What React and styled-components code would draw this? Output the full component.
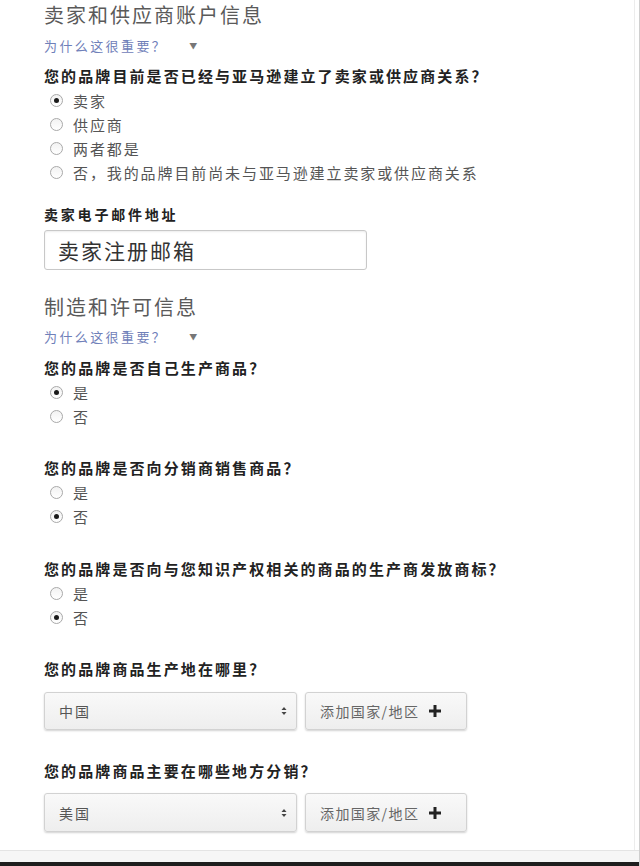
import React from 'react';
import styled, { createGlobalStyle } from 'styled-components';

const GlobalStyle = createGlobalStyle`
  html, body { margin: 0; padding: 0; background: #fff; }
  body { font-family: "Noto Sans CJK SC", "Noto Sans", sans-serif; }
`;

const Page = styled.div`
  width: 640px;
  height: 866px;
  box-sizing: border-box;
  display: flex;
  flex-direction: column;
  border-right: 1px solid #cfcfcf;
`;

const Content = styled.div`
  flex: 1;
  padding-left: 44px;
  border-right: 1px solid #ececec;
  margin-right: 4px;
`;

const Footer = styled.div`
  height: 11px;
  background: #f6f6f6;
  border-top: 1px solid #e4e4e4;
  border-bottom: 4px solid #1e1e1e;
`;

const Heading = styled.h2`
  margin: ${p => p.$gap || 0}px 0 0;
  font-size: 20px;
  font-weight: 400;
  line-height: 30px;
  letter-spacing: 2px;
  color: #5a5a5a;
`;

const WhyLink = styled.div`
  margin-top: ${p => p.$gap || 0}px;
  font-size: 13px;
  line-height: 20px;
  letter-spacing: 2.4px;
  color: #6f80b9;
  display: flex;
  align-items: center;
  gap: 22px;
`;

const Caret = styled.span`
  font-size: 8px;
  color: #777;
`;

const Question = styled.div`
  margin-top: ${p => p.$gap || 0}px;
  font-size: 15px;
  font-weight: 700;
  line-height: 24px;
  letter-spacing: 2.1px;
  color: #222;
`;

const FieldLabel = styled(Question)`
  font-size: 14px;
  line-height: 20px;
  letter-spacing: 2.8px;
`;

const Options = styled.div`
  display: flex;
  flex-direction: column;
`;

const Option = styled.label`
  display: flex;
  align-items: center;
  height: 24px;
  padding-left: 6px;
  gap: 10px;
  font-size: 15px;
  letter-spacing: 1.9px;
  color: #555;
`;

const Radio = styled.span`
  width: 11px;
  height: 11px;
  border-radius: 50%;
  border: 1px solid #a9a9a9;
  background: linear-gradient(#f2f2f2, #ffffff);
  display: flex;
  align-items: center;
  justify-content: center;
  flex-shrink: 0;
  &::after {
    content: '';
    width: 5px;
    height: 5px;
    border-radius: 50%;
    background: ${p => (p.$checked ? '#1a1a1a' : 'transparent')};
  }
`;

const TextInput = styled.div`
  margin-top: 6px;
  width: 323px;
  height: 40px;
  box-sizing: border-box;
  border: 1px solid #c8c8c8;
  border-radius: 3px;
  box-shadow: inset 0 1px 2px rgba(0, 0, 0, 0.08);
  padding-left: 13px;
  display: flex;
  align-items: center;
  font-size: 21px;
  letter-spacing: 2px;
  color: #333;
`;

const SelectRow = styled.div`
  margin-top: ${p => p.$gap || 0}px;
  display: flex;
  gap: 8px;
  height: ${p => p.$h || 38}px;
`;

const Select = styled.div`
  width: 253px;
  box-sizing: border-box;
  border: 1px solid #d2d2d2;
  border-radius: 3px;
  background: linear-gradient(#f9f9f9, #eeeeee);
  box-shadow: 0 1px 2px rgba(0, 0, 0, 0.18);
  display: flex;
  align-items: center;
  justify-content: space-between;
  padding: 0 9px 0 14px;
  font-size: 14px;
  letter-spacing: 2px;
  color: #555;
`;

const AddButton = styled.div`
  width: 162px;
  box-sizing: border-box;
  border: 1px solid #d2d2d2;
  border-radius: 3px;
  background: linear-gradient(#f9f9f9, #eeeeee);
  box-shadow: 0 1px 2px rgba(0, 0, 0, 0.18);
  display: flex;
  align-items: center;
  padding-left: 14px;
  gap: 10px;
  font-size: 14px;
  letter-spacing: 1.4px;
  color: #666;
`;

const Arrows = () => (
  <svg width="6" height="10" viewBox="0 0 6 10">
    <path d="M3 1 L5.5 4 H0.5 Z" fill="#444" />
    <path d="M3 9 L5.5 6 H0.5 Z" fill="#444" />
  </svg>
);

const Plus = () => (
  <svg width="12" height="12" viewBox="0 0 12 12">
    <path d="M4.5 0 H7.5 V4.5 H12 V7.5 H7.5 V12 H4.5 V7.5 H0 V4.5 H4.5 Z" fill="#222" />
  </svg>
);

const RadioGroup = ({ items, selected }) => (
  <Options>
    {items.map(item => (
      <Option key={item}>
        <Radio $checked={item === selected} />
        {item}
      </Option>
    ))}
  </Options>
);

const Why = ({ gap }) => (
  <WhyLink $gap={gap}>
    为什么这很重要？<Caret>▼</Caret>
  </WhyLink>
);

const Region = ({ gap, h, value }) => (
  <SelectRow $gap={gap} $h={h}>
    <Select>
      {value}
      <Arrows />
    </Select>
    <AddButton>
      添加国家/地区
      <Plus />
    </AddButton>
  </SelectRow>
);

const yesNo = ['是', '否'];

export default function App() {
  return (
    <>
      <GlobalStyle />
      <Page>
        <Content>
          <Heading>卖家和供应商账户信息</Heading>
          <Why gap={6} />
          <Question $gap={8}>您的品牌目前是否已经与亚马逊建立了卖家或供应商关系？</Question>
          <RadioGroup
            items={['卖家', '供应商', '两者都是', '否，我的品牌目前尚未与亚马逊建立卖家或供应商关系']}
            selected="卖家"
          />
          <FieldLabel $gap={20}>卖家电子邮件地址</FieldLabel>
          <TextInput>卖家注册邮箱</TextInput>

          <Heading $gap={22}>制造和许可信息</Heading>
          <Why gap={5} />
          <Question $gap={9}>您的品牌是否自己生产商品？</Question>
          <RadioGroup items={yesNo} selected="是" />
          <Question $gap={28}>您的品牌是否向分销商销售商品？</Question>
          <RadioGroup items={yesNo} selected="否" />
          <Question $gap={29}>您的品牌是否向与您知识产权相关的商品的生产商发放商标？</Question>
          <RadioGroup items={yesNo} selected="否" />
          <Question $gap={28}>您的品牌商品生产地在哪里？</Question>
          <Region gap={11} value="中国" />
          <Question $gap={29}>您的品牌商品主要在哪些地方分销？</Question>
          <Region gap={10} h={39} value="美国" />
        </Content>
        <Footer />
      </Page>
    </>
  );
}
